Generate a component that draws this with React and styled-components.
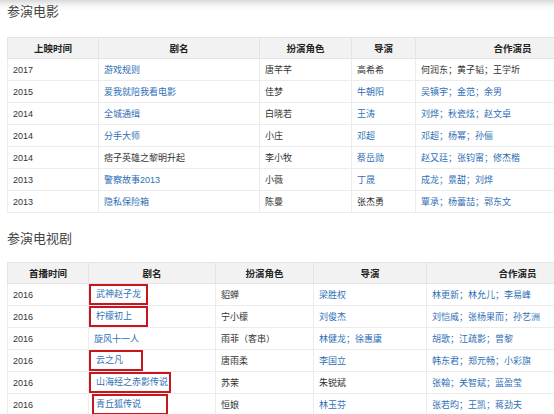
import React from 'react';
import styled, { createGlobalStyle } from 'styled-components';

const GlobalStyle = createGlobalStyle`
    html, body {
        margin: 0;
        padding: 0;
        background: #fff;
        overflow: hidden;
    }
    body {
        font-family: "Liberation Sans", "Noto Sans CJK SC", sans-serif;
        color: #333;
    }
`;

const Page = styled.div`
    width: 554px;
    height: 414px;
    overflow: hidden;
    background: linear-gradient(#d9d9d9 0px, #f4f4f4 5px, #fff 10px);
    padding-left: 7px;
    box-sizing: border-box;
`;

const Title = styled.h2`
    margin: 0;
    height: ${p => p.$h}px;
    padding-top: ${p => p.$top}px;
    box-sizing: border-box;
    font-size: 13px;
    line-height: 18px;
    font-weight: normal;
    color: #444;
    font-family: "Noto Sans CJK SC", sans-serif;
`;

const Table = styled.table`
    border-collapse: collapse;
    table-layout: fixed;
    width: ${p => p.$width}px;
    border: 1px solid #e2e2e2;
    font-size: 9px;
`;

const Th = styled.th`
    height: 20px;
    padding: 0;
    background: #f2f2f2;
    border: 1px solid #e4e4e4;
    font-weight: bold;
    font-size: 9.5px;
    color: #222;
    text-align: center;
`;

const Td = styled.td`
    height: 21px;
    padding: 0 5px;
    border: 1px solid #ececec;
    white-space: nowrap;
    overflow: visible;
    color: #333;
`;

const Link = styled.span`
    color: #2f6fb5;
`;

const Mark = styled.span`
    display: inline-block;
    box-sizing: border-box;
    width: ${p => p.$w}px;
    height: 21px;
    line-height: 17px;
    margin: -4px 0 -4px ${p => p.$dx || -5}px;
    padding-left: ${p => 2 - (p.$dx || -5) - 5 + 3}px;
    border: 2px solid #c7161e;
    vertical-align: middle;
`;

const films = {
    cols: [91, 161, 92, 64, 194],
    head: ['上映时间', '剧名', '扮演角色', '导演', '合作演员'],
    rows: [
        ['2017', ['游戏规则', 1], ['唐芊芊', 0], ['高希希', 0], ['何润东；黄子韬；王学圻', 0]],
        ['2015', ['爱我就陪我看电影', 1], ['佳梦', 0], ['牛朝阳', 1], ['吴镇宇；金范；余男', 1]],
        ['2014', ['全城通缉', 1], ['白晓若', 0], ['王涛', 1], ['刘烨；秋瓷炫；赵文卓', 1]],
        ['2014', ['分手大师', 1], ['小庄', 0], ['邓超', 1], ['邓超；杨幂；孙俪', 1]],
        ['2014', ['痞子英雄之黎明升起', 0], ['李小牧', 0], ['蔡岳勋', 1], ['赵又廷；张钧甯；修杰楷', 1]],
        ['2013', ['警察故事2013', 1], ['小薇', 0], ['丁晟', 1], ['成龙；景甜；刘烨', 1]],
        ['2013', ['隐私保险箱', 1], ['陈曼', 0], ['张杰勇', 0], ['覃承；杨蕾喆；郭东文', 1]],
    ],
};

const dramas = {
    cols: [81, 127, 98, 113, 182],
    head: ['首播时间', '剧名', '扮演角色', '导演', '合作演员'],
    rows: [
        ['2016', ['武神赵子龙', 1, 59], ['貂蝉', 0], ['梁胜权', 1], ['林更新；林允儿；李易峰', 1]],
        ['2016', ['柠檬初上', 1, 59], ['宁小檬', 0], ['刘俊杰', 1], ['刘恺威；张杨果而；孙艺洲', 1]],
        ['2016', ['旋风十一人', 1], ['雨菲（客串）', 0], ['林健龙；徐惠康', 1], ['胡歌；江疏影；曾黎', 1]],
        ['2016', ['云之凡', 1, 54], ['唐雨柔', 0], ['李国立', 1], ['韩东君；郑元畅；小彩旗', 1]],
        ['2016', ['山海经之赤影传说', 1, 82], ['苏茉', 0], ['朱锐斌', 0], ['张翰；关智斌；蓝盈莹', 1]],
        ['2016', ['青丘狐传说', 1, 76, -2], ['恒娘', 0], ['林玉芬', 1], ['张若昀；王凯；蒋劲夫', 1]],
    ],
};

const Cell = ({ cell }) => {
    const [text, isLink, markW, dx] = cell;
    const body = isLink ? <Link>{text}</Link> : text;
    if (markW) {
        return <Td><Mark $w={markW} $dx={dx}>{body}</Mark></Td>;
    }
    return <Td>{body}</Td>;
};

const Section = ({ data }) => {
    const width = data.cols.reduce((a, b) => a + b, 0);
    return (
        <Table $width={width}>
            <colgroup>
                {data.cols.map((w, i) => <col key={i} style={{ width: w }} />)}
            </colgroup>
            <thead>
                <tr>
                    {data.head.map(h => <Th key={h}>{h}</Th>)}
                </tr>
            </thead>
            <tbody>
                {data.rows.map((row, i) => (
                    <tr key={i}>
                        <Td>{row[0]}</Td>
                        {row.slice(1).map((c, j) => <Cell key={j} cell={c} />)}
                    </tr>
                ))}
            </tbody>
        </Table>
    );
};

export default function App() {
    return (
        <Page>
            <GlobalStyle />
            <Title $h={37} $top={2}>参演电影</Title>
            <Section data={films} />
            <Title $h={49} $top={16}>参演电视剧</Title>
            <Section data={dramas} />
        </Page>
    );
}
